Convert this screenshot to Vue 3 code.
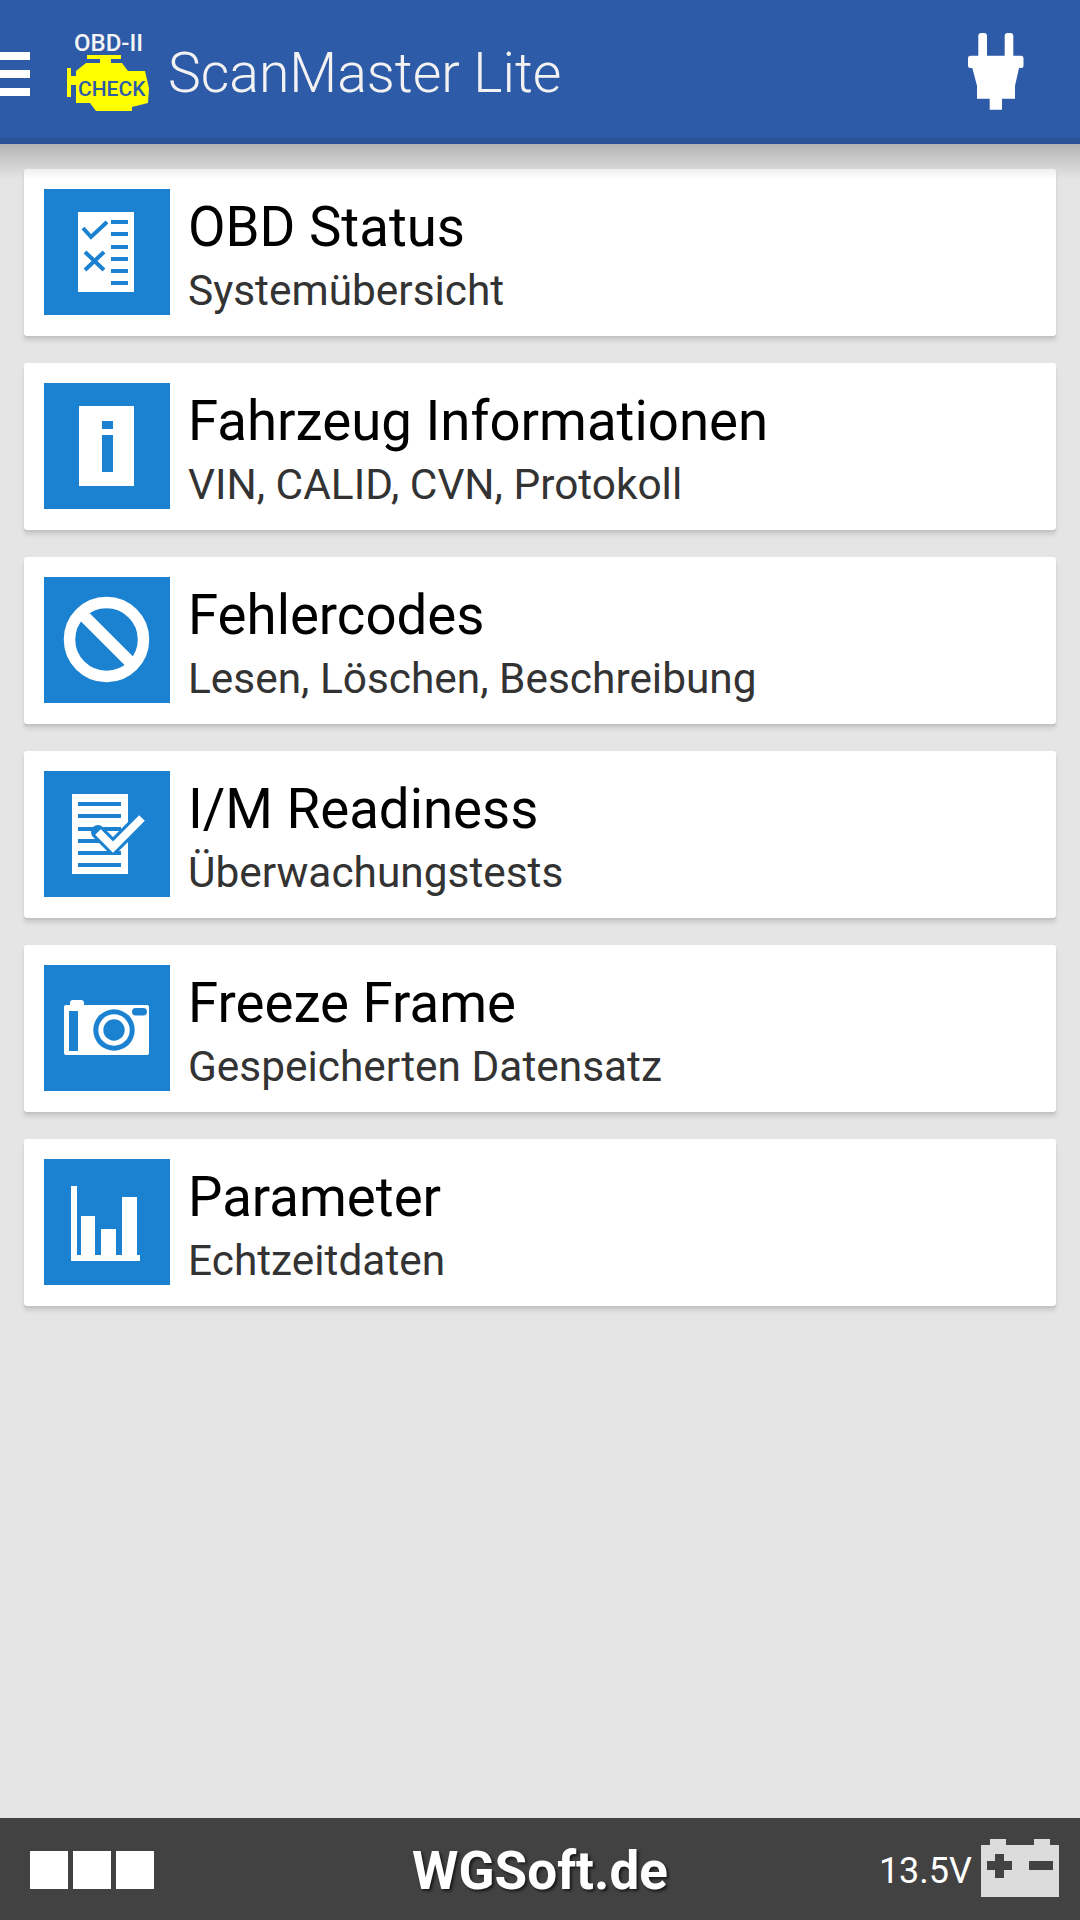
<script setup>
const items = [
  { key: 'status', title: 'OBD Status', sub: 'Systemübersicht' },
  { key: 'info', title: 'Fahrzeug Informationen', sub: 'VIN, CALID, CVN, Protokoll' },
  { key: 'dtc', title: 'Fehlercodes', sub: 'Lesen, Löschen, Beschreibung' },
  { key: 'im', title: 'I/M Readiness', sub: 'Überwachungstests' },
  { key: 'freeze', title: 'Freeze Frame', sub: 'Gespeicherten Datensatz' },
  { key: 'params', title: 'Parameter', sub: 'Echtzeitdaten' },
]
</script>

<template>
  <div class="screen">
    <header class="bar">
      <div class="burger"><span></span><span></span><span></span></div>
      <div class="logo">
        <span class="logo__obd">OBD-II</span>
        <div class="logo__engine">
          <svg width="83" height="56" viewBox="0 0 83 56">
            <path fill="#ffff00" d="M20 0H54V4H44V8H55L61 16H78L82 33L81 48L65 52V56H29L23 48H9V30H4V42H0V13H4V21H9V16L19 8H33V4H20Z" />
          </svg>
          <span class="logo__check">CHECK</span>
        </div>
      </div>
      <span class="bar__title">ScanMaster Lite</span>
      <svg class="plug" width="56" height="77" viewBox="0 0 56 77">
        <path fill="#fff" d="M10.3 3a3 3 0 0 1 3-3h2.7a3 3 0 0 1 3 3v19.7h17.7V3a3 3 0 0 1 3-3h2.6a3 3 0 0 1 3 3v19.7h7.7a2.5 2.5 0 0 1 2.5 2.5v7.3a2.5 2.5 0 0 1-2.5 2.5H51L47 52.7v13H34v11H21.7v-11H9v-13L4.3 35H2.500A2.500 2.500 0 0 1 0 32.500v-7.300a2.500 2.500 0 0 1 2.500-2.500h7.800z" />
      </svg>
    </header>

    <main class="list">
      <div v-for="item in items" :key="item.key" class="card">
        <div class="card__icon">
          <svg v-if="item.key === 'status'" width="126" height="126" viewBox="0 0 126 126">
            <rect x="34" y="23" width="56" height="80" fill="#fff" />
            <path d="M39 39l8 9 16-15M41 63l19 18M60 63L41 81" fill="none" stroke="#1a82d0" stroke-width="4" />
            <path d="M67 33h17M67 45h17M67 58h17M67 70h17M67 82h17M67 94h17" stroke="#1a82d0" stroke-width="4" />
          </svg>
          <svg v-else-if="item.key === 'info'" width="126" height="126" viewBox="0 0 126 126">
            <rect x="35" y="23" width="55" height="80" fill="#fff" />
            <rect x="58" y="38" width="11" height="8" fill="#1a82d0" />
            <rect x="58" y="52" width="11" height="37" fill="#1a82d0" />
          </svg>
          <svg v-else-if="item.key === 'dtc'" width="126" height="126" viewBox="0 0 126 126">
            <circle cx="62.500" cy="62.500" r="37" fill="none" stroke="#fff" stroke-width="11.500" />
            <path d="M37 36l52 52" stroke="#fff" stroke-width="12" />
          </svg>
          <svg v-else-if="item.key === 'im'" width="126" height="126" viewBox="0 0 126 126">
            <rect x="28" y="23" width="56" height="80" fill="#fff" />
            <path d="M34 33h43M34 45h43M34 58h43M34 70h43M34 82h43M34 94h43" stroke="#1a82d0" stroke-width="4" />
            <clipPath id="doc-clip"><rect x="28" y="23" width="56" height="80" /></clipPath>
            <path d="M54 61l15 15 29-29" fill="none" stroke="#1a82d0" stroke-width="14" stroke-linejoin="round" stroke-linecap="round" clip-path="url(#doc-clip)" />
            <path d="M54 61l15 15 29-29" fill="none" stroke="#fff" stroke-width="8" />
          </svg>
          <svg v-else-if="item.key === 'freeze'" width="126" height="126" viewBox="0 0 126 126">
            <path fill="#fff" d="M20 42q0-2 2-2h4v-2q0-3 3-3h8q3 0 3 3v2h63q2 0 2 2v46q0 2-2 2H22q-2 0-2-2z" />
            <rect x="25" y="46" width="9" height="40" fill="#1a82d0" />
            <circle cx="70" cy="65" r="20.700" fill="#1a82d0" />
            <circle cx="70" cy="65" r="15.700" fill="#fff" />
            <circle cx="70" cy="65" r="10.700" fill="#1a82d0" />
            <rect x="88" y="43" width="15" height="7.500" rx="3.700" fill="#1a82d0" />
          </svg>
          <svg v-else width="126" height="126" viewBox="0 0 126 126">
            <path fill="#fff" d="M27 27h6v69h4V57h14v39h6V70h15v26h6V38h15v58h3v6H27z" />
          </svg>
        </div>
        <div class="card__text">
          <div class="card__title">{{ item.title }}</div>
          <div class="card__sub">{{ item.sub }}</div>
        </div>
      </div>
    </main>

    <footer class="status">
      <div class="status__boxes"><span></span><span></span><span></span></div>
      <span class="status__brand">WGSoft.de</span>
      <div class="status__battery">
        <span class="status__volt">13.5V</span>
        <svg width="78" height="58" viewBox="0 0 78 58">
          <path fill="#dcdcdc" d="M9 0h16v6h28V0h16v6h9v52H0V6h9z" />
          <path fill="#424242" d="M14 15h9v7h8v9h-8v8h-9v-8H6v-9h8zM48 22h24v9H48z" />
        </svg>
      </div>
    </footer>
  </div>
</template>

<style scoped>
.screen {
  width: 1080px;
  height: 1920px;
  display: flex;
  flex-direction: column;
  background: #e5e5e5;
  font-family: Roboto, sans-serif;
  overflow: hidden;
}

.bar {
  position: relative;
  z-index: 1;
  flex: none;
  height: 144px;
  box-sizing: border-box;
  display: flex;
  align-items: center;
  background: #2d5ba8;
  border-bottom: 6px solid #2a5296;
}

/* soft shadow falls over the first card */
.bar::after {
  content: '';
  position: absolute;
  left: 0;
  right: 0;
  top: 144px;
  height: 36px;
  background: linear-gradient(rgba(0, 0, 0, 0.22), rgba(0, 0, 0, 0.1) 50%, rgba(0, 0, 0, 0));
  pointer-events: none;
}

.burger {
  width: 30px;
  flex: none;
  display: flex;
  flex-direction: column;
  gap: 10px;
  margin-top: 10px;
}

.burger span {
  height: 8px;
  background: #fff;
}

.logo {
  position: relative;
  width: 83px;
  flex: none;
  margin-left: 37px;
  margin-top: 6px;
  display: flex;
  flex-direction: column;
  align-items: center;
}

.logo__obd {
  color: #f4f4f4;
  font-size: 24px;
  font-weight: 500;
  line-height: 20px;
}

.logo__engine {
  position: relative;
  height: 56px;
  margin-top: 2px;
}

.logo__engine svg {
  display: block;
}

.logo__check {
  position: absolute;
  left: 11px;
  top: 22px;
  color: #2d5ba8;
  font-size: 21px;
  font-weight: 500;
  line-height: 24px;
}

.bar__title {
  margin-left: 18px;
  margin-top: 8px;
  color: #f2f2f2;
  font-size: 55.300px;
  font-weight: 300;
}

.plug {
  margin-left: auto;
  margin-right: 56px;
  margin-top: 5px;
}

.list {
  flex: 1;
  display: flex;
  flex-direction: column;
  gap: 27px;
  padding: 25px 24px 0;
}

.card {
  height: 167px;
  box-sizing: border-box;
  display: flex;
  align-items: flex-start;
  padding: 20px;
  background: #fff;
  border-radius: 3px;
  box-shadow: 0 2px 1px #c4c4c4, 0 5px 4px rgba(0, 0, 0, 0.1);
}

.card__icon {
  width: 126px;
  height: 126px;
  flex: none;
  background: #1a82d0;
}

.card__icon svg {
  display: block;
}

.card__text {
  margin-left: 18px;
  margin-top: 8px;
}

.card__title {
  color: #000;
  font-size: 54.600px;
  line-height: 60px;
}

.card__sub {
  margin-top: 10px;
  color: #333;
  font-size: 42.400px;
  line-height: 48px;
}

.status {
  flex: none;
  height: 102px;
  position: relative;
  display: flex;
  align-items: center;
  justify-content: center;
  background: #424242;
}

.status__boxes {
  position: absolute;
  left: 30px;
  top: 33px;
  display: flex;
  gap: 5px;
}

.status__boxes span {
  width: 38px;
  height: 38px;
  background: #fff;
}

.status__brand {
  margin-top: 4px;
  color: #fff;
  font-size: 53px;
  font-weight: 700;
  text-shadow: 2px 2px 3px rgba(0, 0, 0, 0.65);
}

.status__battery {
  position: absolute;
  right: 21px;
  top: 21px;
  display: flex;
  align-items: flex-start;
  gap: 9px;
}

.status__volt {
  margin-top: 11px;
  color: #fff;
  font-size: 36px;
  font-weight: 400;
  line-height: 42px;
}

.status__battery svg {
  display: block;
}
</style>

<style>
html, body {
  margin: 0;
  background: #e5e5e5;
}
</style>
